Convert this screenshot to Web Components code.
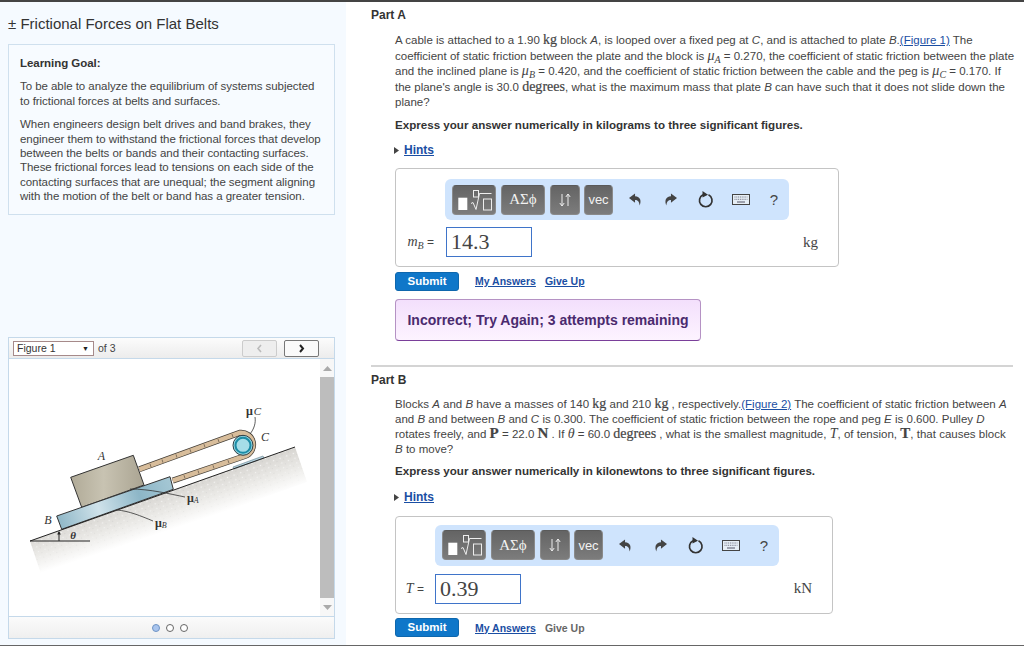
<!DOCTYPE html>
<html>
<head>
<meta charset="utf-8">
<title>Frictional Forces on Flat Belts</title>
<style>
  html, body { margin: 0; height: 646px; overflow: hidden; background: #fff; }
  body { font-family: "Liberation Sans", Arial, sans-serif; font-size: 12px; color: #333; }
</style>
</head>
<body>
<mp-page>
  <mp-intro slot="left" heading="Frictional Forces on Flat Belts">
    <p>To be able to analyze the equilibrium of systems subjected<br>to frictional forces at belts and surfaces.</p>
    <p>When engineers design belt drives and band brakes, they<br>engineer them to withstand the frictional forces that develop<br>between the belts or bands and their contacting surfaces.<br>These frictional forces lead to tensions on each side of the<br>contacting surfaces that are unequal; the segment aligning<br>with the motion of the belt or band has a greater tension.</p>
  </mp-intro>
  <mp-figure slot="left"></mp-figure>

  <mp-part slot="right" name="Part A" express="Express your answer numerically in kilograms to three significant figures.">
    A cable is attached to a 1.90 <mp-unit>kg</mp-unit> block <i>A</i>, is looped over a fixed peg at <i>C</i>, and is attached to plate <i>B</i>.<mp-link>(Figure 1)</mp-link> The<br>
    coefficient of static friction between the plate and the block is <mp-var sub="A">μ</mp-var> = 0.270, the coefficient of static friction between the plate<br>
    and the inclined plane is <mp-var sub="B">μ</mp-var> = 0.420, and the coefficient of static friction between the cable and the peg is <mp-var sub="C">μ</mp-var> = 0.170. If<br>
    the plane's angle is 30.0 <mp-unit>degrees</mp-unit>, what is the maximum mass that plate <i>B</i> can have such that it does not slide down the<br>
    plane?
    <mp-answer slot="answer" value="14.3" unit="kg" width="444" label-width="51" label-gap="12" pad="10" gap="7" unit-gap="20"><mp-var sub="B" slot="label">m</mp-var> =</mp-answer>
    <mp-actions slot="answer" giveup="link"></mp-actions>
    <mp-alert slot="answer">Incorrect; Try Again; 3 attempts remaining</mp-alert>
  </mp-part>

  <mp-part slot="right" name="Part B" express="Express your answer numerically in kilonewtons to three significant figures." divider>
    Blocks <i>A</i> and <i>B</i> have a masses of 140 <mp-unit>kg</mp-unit> and 210 <mp-unit>kg</mp-unit> , respectively.<mp-link>(Figure 2)</mp-link> The coefficient of static friction between <i>A</i><br>
    and <i>B</i> and between <i>B</i> and <i>C</i> is 0.300. The coefficient of static friction between the rope and peg <i>E</i> is 0.600. Pulley <i>D</i><br>
    rotates freely, and <mp-unit strong>P</mp-unit> = 22.0 <mp-unit strong>N</mp-unit> . If <mp-var>θ</mp-var> = 60.0 <mp-unit>degrees</mp-unit> , what is the smallest magnitude, <mp-var>T</mp-var>, of tension, <mp-unit strong>T</mp-unit>, that causes block<br>
    <i>B</i> to move?
    <mp-answer slot="answer" value="0.39" unit="kN" width="438" label-width="41" label-gap="11" pad="8" gap="8" unit-gap="20"><mp-var slot="label">T</mp-var> =</mp-answer>
    <mp-actions slot="answer" giveup="muted"></mp-actions>
  </mp-part>
</mp-page>

<script>
class MpPage extends HTMLElement {
  constructor() {
    super();
    this.attachShadow({ mode: 'open' });
    this.shadowRoot.innerHTML = `
      <style>
        :host {
          display: grid;
          grid-template-columns: 346px 1fr;
          height: 646px;
          box-sizing: border-box;
          border-top: 2px solid #444;
          border-bottom: 1px solid #666;
        }
        .left { background: #f5faff; display: flex; flex-direction: column; padding: 0 11px 0 8px; overflow: hidden; }
        .right { padding: 0 11px 0 25px; overflow: hidden; }
      </style>
      <div class="left"><slot name="left"></slot></div>
      <div class="right"><slot name="right"></slot></div>
    `;
  }
}

class MpIntro extends HTMLElement {
  constructor() {
    super();
    this.attachShadow({ mode: 'open' });
    this.shadowRoot.innerHTML = `
      <style>
        :host { display: block; }
        h1 { margin: 12px 0 10px; font-size: 15px; line-height: 20px; font-weight: 400; color: #333; }
        .goal {
          box-sizing: border-box;
          height: 171px;
          padding: 11px 0 0 11px;
          background: #f7fbff;
          border: 1px solid #cfe0ee;
          font-size: 11.5px;
          letter-spacing: -.05px;
          line-height: 14.4px;
          color: #444;
          white-space: nowrap;
        }
        .goal b { display: block; color: #333; margin-bottom: 9px; }
        ::slotted(p) { margin: 0 0 9px; }
      </style>
      <h1>± ${this.getAttribute('heading')}</h1>
      <div class="goal"><b>Learning Goal:</b><slot></slot></div>
    `;
  }
}

class MpFigure extends HTMLElement {
  constructor() {
    super();
    this.attachShadow({ mode: 'open' });
    this.shadowRoot.innerHTML = `
      <style>
        :host {
          display: block;
          margin-top: 122px;
          width: 327px;
          box-sizing: border-box;
          border: 1px solid #c5d9ea;
          background: #fff;
        }
        .head {
          height: 20px;
          display: flex;
          align-items: center;
          gap: 4px;
          padding: 0 15px 0 4px;
          background: linear-gradient(#fcfcfc, #ececec);
          border-bottom: 1px solid #c5d9ea;
          font-size: 10.5px;
          color: #444;
        }
        .select {
          width: 81px;
          height: 15px;
          box-sizing: border-box;
          border: 1px solid #a68a8a;
          background: #fff;
          color: #333;
          padding: 0 4px 0 3px;
          line-height: 13px;
          display: flex;
          justify-content: space-between;
        }
        .select span:last-child { font-size: 7px; color: #222; }
        .pager { margin-left: auto; display: flex; gap: 7px; }
        .pager div {
          width: 35px;
          height: 17px;
          box-sizing: border-box;
          border: 1px solid #ccc;
          border-radius: 2px;
          background: #eee;
          display: grid;
          place-items: center;
        }
        .pager div + div { border-color: #777; background: #fafafa; }
        .body { height: 257px; display: grid; grid-template-columns: 311px 14px; }
        svg { display: block; }
        .bar { background: #f7f7f7; display: flex; flex-direction: column; align-items: stretch; }
        .arrow { height: 18px; display: grid; place-items: center; }
        .thumb { flex: 1; background: #bdbdbd; }
        .foot {
          height: 21px;
          border-top: 1px solid #c5d9ea;
          background: linear-gradient(#fbfbfb, #efefef);
          display: flex;
          justify-content: center;
          align-items: center;
          gap: 6px;
          padding-right: 4px;
        }
        .dot { width: 6px; height: 6px; border-radius: 50%; border: 1px solid #666; background: #fff; }
        .dot.on { background: #a9c5ee; border-color: #6f94c4; }
        text { font-family: "Liberation Serif", "Times New Roman", serif; fill: #333; }
      </style>
      <div class="head">
        <div class="select"><span>Figure 1</span><span>▼</span></div>
        <span>of 3</span>
        <div class="pager">
          <div><svg width="7" height="9" viewBox="0 0 7 9"><path d="M5 1 2 4.500 5 8" fill="none" stroke="#bbb" stroke-width="1.600"/></svg></div>
          <div><svg width="7" height="9" viewBox="0 0 7 9"><path d="M2 1 5 4.500 2 8" fill="none" stroke="#222" stroke-width="2"/></svg></div>
        </div>
      </div>
      <div class="body">
        <svg width="311" height="257" viewBox="9 359 311 257">
          <defs>
            <linearGradient id="ground" gradientUnits="userSpaceOnUse" x1="158" y1="494" x2="170" y2="530">
              <stop offset="0" stop-color="#d8d6d2"/>
              <stop offset=".5" stop-color="#ebeae7"/>
              <stop offset="1" stop-color="#fff"/>
            </linearGradient>
            <pattern id="speck" width="7" height="5" patternUnits="userSpaceOnUse" patternTransform="rotate(-20)">
              <circle cx="1.500" cy="1.500" r=".8" fill="#fff" opacity=".8"/>
              <circle cx="4.500" cy="3.500" r=".6" fill="#bbb" opacity=".5"/>
            </pattern>
            <linearGradient id="fade" gradientUnits="userSpaceOnUse" x1="158" y1="494" x2="170" y2="530">
              <stop offset="0" stop-color="#fff"/>
              <stop offset="1" stop-color="#000"/>
            </linearGradient>
            <mask id="fader" maskUnits="userSpaceOnUse" x="0" y="400" width="320" height="216">
              <rect x="0" y="400" width="320" height="216" fill="url(#fade)"/>
            </mask>
            <linearGradient id="block" x1="0" x2="1" y1="0" y2="0">
              <stop offset="0" stop-color="#b0aa97"/>
              <stop offset=".45" stop-color="#c8c3b2"/>
              <stop offset="1" stop-color="#aaa492"/>
            </linearGradient>
            <linearGradient id="plate" gradientUnits="userSpaceOnUse" x1="57" y1="520" x2="173" y2="480">
              <stop offset="0" stop-color="#8fb7c7"/>
              <stop offset=".35" stop-color="#cfe2ea"/>
              <stop offset=".7" stop-color="#8db6c7"/>
              <stop offset="1" stop-color="#a6c8d5"/>
            </linearGradient>
          </defs>
          <polygon points="30,541 295,447 307,482 42,577" fill="url(#ground)"/>
          <polygon points="30,541 295,447 307,482 42,577" fill="url(#speck)" mask="url(#fader)"/>
          <path d="M139.300 469.300 240 432.700A12 12 0 0 1 245 456L172.700 480.700" fill="none" stroke="#443f38" stroke-width="6"/>
          <path d="M139.300 469.300 240 432.700A12 12 0 0 1 245 456L172.700 480.700" fill="none" stroke="#d8bd9b" stroke-width="4.500"/>
          <path d="M150 463.800l1 3.200M162 459.500l1 3.200M176 454.400l1 3.200M190 449.300l1 3.200M204 444.200l1 3.200M218 439l1 3.200M232 434l1 3.200M184 475.200l1 3.200M198 470.500l1 3.200M213 465.300l1 3.200M228 460.200l1 3.200" stroke="#6b5d4c" stroke-width=".8"/>
          <path d="M233 467 263 456l1 2-30 11z" fill="#b5d2de" stroke="#67808c" stroke-width=".6"/>
          <circle cx="243" cy="445.300" r="10" fill="#8fd3df" stroke="#2f3f46" stroke-width="1"/>
          <circle cx="243" cy="445.300" r="7.500" fill="#a6dde8" stroke="#1c8ca6" stroke-width="2"/>
          <polygon points="70.700,477.300 133.300,455.300 144,485 81.700,507.300" fill="url(#block)" stroke="#333" stroke-width="1"/>
          <polygon points="56.700,516 170,476.700 173.300,489.300 61.700,529.300" fill="url(#plate)" stroke="#333" stroke-width="1"/>
          <path d="M30 541 295 447M30 541H90" fill="none" stroke="#222" stroke-width="1"/>
          <path d="M59 541V532" stroke="#222" stroke-width="1"/>
          <path d="M59 531l-1.800 3.500h3.600z" fill="#222"/>
          <path d="M255 417c1 6-1 12-5 17M130 489c20 0 40 5 55 8M117 510c12 1 24 6 36 11" fill="none" stroke="#333" stroke-width=".8"/>
          <text x="101.500" y="460" font-size="12" font-style="italic" text-anchor="middle">A</text>
          <text x="48" y="524" font-size="12" font-style="italic" text-anchor="middle">B</text>
          <text x="265" y="441" font-size="12" font-style="italic" text-anchor="middle">C</text>
          <text x="73" y="539" font-size="11" font-weight="700" font-style="italic" text-anchor="middle">θ</text>
          <text x="246" y="415" font-size="12" font-weight="700">μ<tspan font-size="11" font-weight="400" font-style="italic" dx="1">C</tspan></text>
          <text x="187" y="502" font-size="12" font-weight="700">μ<tspan font-size="8" font-weight="400" font-style="italic" dy="1">A</tspan></text>
          <text x="155" y="527" font-size="12" font-weight="700">μ<tspan font-size="8" font-weight="400" font-style="italic" dy="1">B</tspan></text>
        </svg>
        <div class="bar">
          <div class="arrow"><svg width="9" height="5" viewBox="0 0 9 5"><path d="M0 5 4.500 0 9 5z" fill="#aaa"/></svg></div>
          <div class="thumb"></div>
          <div class="arrow"><svg width="9" height="5" viewBox="0 0 9 5"><path d="M0 0 4.500 5 9 0z" fill="#aaa"/></svg></div>
        </div>
      </div>
      <div class="foot"><span class="dot on"></span><span class="dot"></span><span class="dot"></span></div>
    `;
  }
}

class MpUnit extends HTMLElement {
  constructor() {
    super();
    this.attachShadow({ mode: 'open' });
    const strong = this.hasAttribute('strong');
    this.shadowRoot.innerHTML = `<style>
        :host { font-family: "Liberation Serif", "Times New Roman", serif; font-size: ${strong ? 15 : 14}px; font-weight: ${strong ? 700 : 400}; line-height: 1px; color: #444; -webkit-text-stroke: .2px #444; }
      </style><slot></slot>`;
  }
}

class MpVar extends HTMLElement {
  constructor() {
    super();
    this.attachShadow({ mode: 'open' });
    const sub = this.getAttribute('sub');
    this.shadowRoot.innerHTML = `<style>
        :host { font-family: "Liberation Serif", "Times New Roman", serif; font-style: italic; font-size: 14px; line-height: 1px; color: #444; }
        sub { font-size: 10px; line-height: 1px; vertical-align: -3px; }
      </style><slot></slot>${sub ? `<sub>${sub}</sub>` : ''}`;
  }
}

class MpLink extends HTMLElement {
  constructor() {
    super();
    this.attachShadow({ mode: 'open' });
    this.shadowRoot.innerHTML = `<style>
        :host { color: #1a4ea3; text-decoration: underline; }
      </style><slot></slot>`;
  }
}

class MpPart extends HTMLElement {
  constructor() {
    super();
    this.attachShadow({ mode: 'open' });
    const divider = this.hasAttribute('divider');
    // the two parts sit on slightly different baselines in the original
    const s = divider
      ? { line: 15, text: 9.5, express: 6, hints: 12, after: 10.5 }
      : { line: 15.5, text: 10, express: 6, hints: 11, after: 10.5 };
    this.shadowRoot.innerHTML = `
      <style>
        :host { display: block; }
        .rule { height: 2px; background: #d4d4d4; margin-top: 24px; margin-bottom: 5px; }
        h2 { margin: 0; padding-top: ${divider ? 0 : 5}px; font-size: 12px; line-height: 16px; font-weight: 700; color: #333; }
        .content { padding-left: 24px; }
        .text { margin-top: ${s.text}px; font-size: 11.5px; letter-spacing: .01px; line-height: ${s.line}px; color: #444; white-space: nowrap; }
        .express { margin-top: ${s.express}px; font-size: 11.6px; font-weight: 700; color: #333; line-height: 15px; }
        .hints { margin-top: ${s.hints}px; line-height: 15px; margin-bottom: ${s.after}px; display: flex; align-items: center; gap: 5px; font-weight: 700; color: #1a4ea3; margin-left: -1px; }
        .hints u { text-decoration: underline; }
        .hints svg { flex: none; }
      </style>
      ${divider ? '<div class="rule"></div>' : ''}
      <h2>${this.getAttribute('name')}</h2>
      <div class="content">
        <div class="text"><slot></slot></div>
        <div class="express">${this.getAttribute('express')}</div>
        <div class="hints"><svg width="5" height="7" viewBox="0 0 5 7"><path d="M0 0 5 3.500 0 7z" fill="#444"/></svg><u>Hints</u></div>
        <slot name="answer"></slot>
      </div>
    `;
  }
}

class MpToolbar extends HTMLElement {
  constructor() {
    super();
    this.attachShadow({ mode: 'open' });
    this.shadowRoot.innerHTML = `
      <style>
        :host { display: flex; align-items: center; width: 344px; height: 41px; box-sizing: border-box; padding-left: 7px; background: #cfe4fd; border-radius: 6px; }
        .btn {
          flex: none;
          box-sizing: border-box;
          height: 30px;
          margin-right: 5px;
          border-radius: 4px;
          border: 1px solid #8a8a8a;
          border-top-color: #5a5a5a;
          background: linear-gradient(#646464, #7c7c7c);
          color: #f2f2f2;
          display: grid;
          place-items: center;
        }
        .tpl { width: 44px; }
        .sym { width: 44px; font-family: "Liberation Serif", "Times New Roman", serif; font-size: 15px; }
        .ud { width: 30px; margin-right: 4px; }
        .vec { width: 29px; font-size: 13px; margin-right: 0; }
        .icons { display: flex; align-items: center; margin-left: 5px; }
        .icons span { width: 35px; display: grid; place-items: center; }
        .icons .q { font-size: 15px; color: #444; width: 24px; margin-left: 4px; }
      </style>
      <div class="btn tpl"><svg width="37" height="22" viewBox="0 0 37 22">
        <rect x="2.300" y="8.700" width="9" height="12.300" fill="#fff"/>
        <path d="M15 14.500 17 13.500 20 20.500 23.500 4.500H35.500" fill="none" stroke="#eee" stroke-width="1"/>
        <rect x="17.500" y="1.500" width="5" height="6.500" fill="none" stroke="#eee"/>
        <rect x="27.500" y="10" width="8" height="11" fill="none" stroke="#eee"/>
      </svg></div>
      <div class="btn sym">ΑΣϕ</div>
      <div class="btn ud"><svg width="14" height="14" viewBox="0 0 14 14"><path d="M4 1V13M1.800 10 4 13 6.200 10M10 13V1M7.800 4 10 1 12.200 4" fill="none" stroke="#eee" stroke-width="1"/></svg></div>
      <div class="btn vec">vec</div>
      <div class="icons">
        <span><svg width="13" height="13" viewBox="0 0 14 13"><path d="M6.500 0 0 5 6.500 10V7C9.500 7 11 8.500 11.500 13 13.500 8 12.500 3.500 6.500 3z" fill="#444"/></svg></span>
        <span><svg width="13" height="13" viewBox="0 0 14 13"><path d="M7.500 0 14 5 7.500 10V7C4.500 7 3 8.500 2.500 13 .5 8 1.500 3.500 7.500 3z" fill="#444"/></svg></span>
        <span><svg width="16" height="17" viewBox="0 0 16 17"><path d="M10.500 3.800A6.300 6.300 0 1 1 5 3.800" fill="none" stroke="#333" stroke-width="1.700"/><path d="M4.500 0 10 3.700 4.500 6.500z" fill="#333"/></svg></span>
        <span><svg width="18" height="11" viewBox="0 0 18 11"><rect x=".5" y=".5" width="17" height="10" fill="#e6eef5" stroke="#444"/><path d="M2.500 3H15.500M2.500 5.300H15.500" stroke="#778" stroke-dasharray="1 .8"/><path d="M5 8H13" stroke="#556"/></svg></span>
        <span class="q">?</span>
      </div>
    `;
  }
}

class MpAnswer extends HTMLElement {
  constructor() {
    super();
    this.attachShadow({ mode: 'open' });
    const labelWidth = this.getAttribute('label-width');
    this.shadowRoot.innerHTML = `
      <style>
        :host {
          display: block;
          width: ${this.getAttribute('width')}px;
          box-sizing: border-box;
          padding: ${this.getAttribute('pad')}px 0 9px;
          border: 1px solid #c4c4c4;
          border-radius: 4px;
          background: #fff;
        }
        mp-toolbar { margin-left: ${labelWidth - 2}px; margin-bottom: ${this.getAttribute('gap')}px; }
        .row { display: flex; align-items: center; }
        .label { width: ${labelWidth - 13}px; flex: none; text-align: right; margin-right: ${this.getAttribute('label-gap')}px; font-size: 12px; color: #444; white-space: nowrap; }
        .input {
          width: 86px;
          height: 30px;
          box-sizing: border-box;
          border: 1px solid #3f74c9;
          padding-left: 4px;
          font-family: "Liberation Serif", "Times New Roman", serif;
          font-size: 22px;
          line-height: 27px;
          color: #444;
        }
        .unit { margin-left: auto; margin-right: ${this.getAttribute('unit-gap')}px; font-family: "Liberation Serif", "Times New Roman", serif; font-size: 15px; color: #444; }
      </style>
      <mp-toolbar></mp-toolbar>
      <div class="row">
        <div class="label"><slot name="label"></slot> <slot></slot></div>
        <div class="input">${this.getAttribute('value')}</div>
        <div class="unit">${this.getAttribute('unit')}</div>
      </div>
    `;
  }
}

class MpActions extends HTMLElement {
  constructor() {
    super();
    this.attachShadow({ mode: 'open' });
    const muted = this.getAttribute('giveup') === 'muted';
    this.shadowRoot.innerHTML = `
      <style>
        :host { display: flex; align-items: center; margin-top: 4.500px; font-size: 10.500px; font-weight: 700; }
        .submit {
          width: 64px;
          height: 19px;
          box-sizing: border-box;
          border: 1px solid #0e67ad;
          border-radius: 3px;
          background: #0f77c9;
          color: #fff;
          font-size: 11.500px;
          line-height: 17px;
          text-align: center;
          margin-right: 16px;
        }
        a { color: #1a4ea3; text-decoration: underline; margin-right: 9px; }
        a.muted { color: #666; text-decoration: none; }
      </style>
      <div class="submit">Submit</div>
      <a>My Answers</a>
      <a class="${muted ? 'muted' : ''}">Give Up</a>
    `;
  }
}

class MpAlert extends HTMLElement {
  constructor() {
    super();
    this.attachShadow({ mode: 'open' });
    this.shadowRoot.innerHTML = `<style>
        :host {
          display: block;
          width: 306px;
          height: 42px;
          margin-top: 8px;
          box-sizing: border-box;
          border: 1px solid #b592c4;
          border-bottom-color: #7a3f9a;
          border-radius: 4px;
          background: linear-gradient(#f3dffc, #fdf3ff);
          color: #4a2a6e;
          font-size: 14px;
          font-weight: 700;
          line-height: 40px;
          text-align: center;
        }
      </style><slot></slot>`;
  }
}

customElements.define('mp-unit', MpUnit);
customElements.define('mp-var', MpVar);
customElements.define('mp-link', MpLink);
customElements.define('mp-toolbar', MpToolbar);
customElements.define('mp-answer', MpAnswer);
customElements.define('mp-actions', MpActions);
customElements.define('mp-alert', MpAlert);
customElements.define('mp-intro', MpIntro);
customElements.define('mp-figure', MpFigure);
customElements.define('mp-part', MpPart);
customElements.define('mp-page', MpPage);
</script>
</body>
</html>
